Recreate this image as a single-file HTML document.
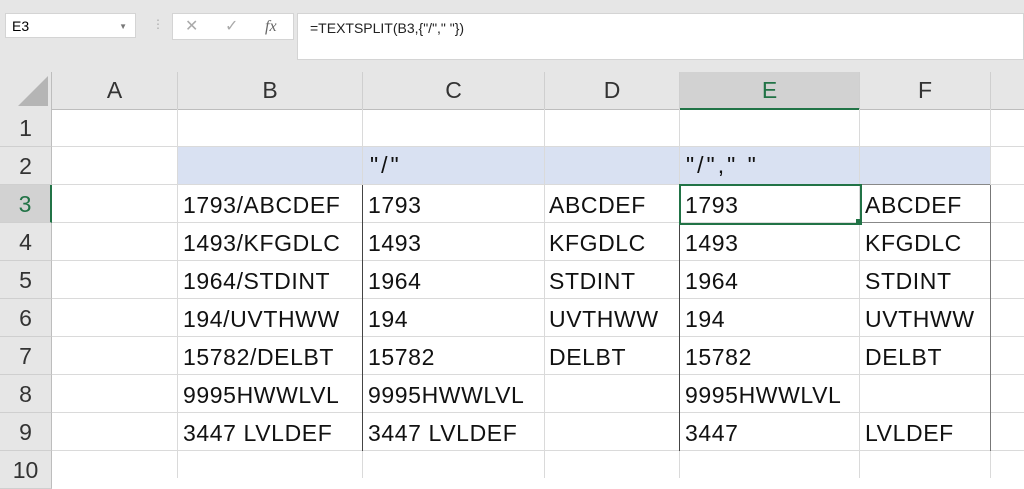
<!DOCTYPE html>
<html><head><style>
body{margin:0;width:1024px;height:478px;overflow:hidden;background:#fff;font-family:"Liberation Sans",sans-serif;position:relative}
.top{position:absolute;left:0;top:0;width:1024px;height:72px;background:#e6e6e6}
.box{position:absolute;background:#fff;border:1px solid #d4d4d4}
.ch{position:absolute;top:72px;height:37px;background:#e6e6e6;border-right:1px solid #cfcfcf;border-bottom:1px solid #bdbdbd;text-align:center;line-height:37px;font-size:23px;color:#333}
.rh{position:absolute;left:0;width:51px;height:37px;background:#e6e6e6;border-right:1px solid #bdbdbd;border-bottom:1px solid #cfcfcf;text-align:center;line-height:38px;font-size:23px;color:#333}
.vl{position:absolute;top:109px;width:1px;height:369px;background:#dadada}
.hl{position:absolute;left:52px;width:972px;height:1px;background:#dadada}
.t{position:absolute;font-size:23px;letter-spacing:0.6px;color:#111;line-height:40px;white-space:nowrap}
.bl{position:absolute;width:1px;background:#444}
</style></head><body>
<div class="top"></div>
<div class="box" style="left:5px;top:13px;width:131px;height:25px;font-size:14px;line-height:25px;padding-left:6px;box-sizing:border-box">E3<span style="position:absolute;right:8px;font-size:8px;color:#777">▼</span></div>
<div style="position:absolute;left:152px;top:17px;color:#aaa;font-size:12px">⋮</div>
<div class="box" style="left:172px;top:13px;width:120px;height:25px;color:#aaa;font-size:16px;line-height:25px">
<span style="position:absolute;left:12px">✕</span><span style="position:absolute;left:52px">✓</span><span style="position:absolute;left:92px;font-family:'Liberation Serif',serif;font-style:italic;color:#666">fx</span></div>
<div class="box" style="left:297px;top:13px;width:727px;height:47px;font-size:14px;padding:6px 0 0 12px;box-sizing:border-box;color:#222">=TEXTSPLIT(B3,{"/"," "})</div>
<div class="ch" style="left:0;width:51px;border-right:1px solid #bdbdbd"><div style="position:absolute;right:3px;bottom:3px;width:0;height:0;border-left:30px solid transparent;border-bottom:30px solid #b5b5b5"></div></div>
<div class="ch" style="left:52px;width:125px">A</div>
<div class="ch" style="left:178px;width:184px">B</div>
<div class="ch" style="left:363px;width:181px">C</div>
<div class="ch" style="left:545px;width:134px">D</div>
<div class="ch" style="left:680px;width:179px;background:#d2d2d2;color:#217346;border-bottom:2px solid #217346;height:36px">E</div>
<div class="ch" style="left:860px;width:130px">F</div>
<div class="ch" style="left:991px;width:33px;border-right:0"></div>
<div style="position:absolute;left:178px;top:147px;width:813px;height:38px;background:#d9e1f2"></div>
<div class="vl" style="left:177px"></div><div class="vl" style="left:362px"></div><div class="vl" style="left:544px"></div><div class="vl" style="left:679px"></div><div class="vl" style="left:859px"></div><div class="vl" style="left:990px"></div>
<div class="hl" style="top:146px"></div><div class="hl" style="top:184px"></div><div class="hl" style="top:222px"></div><div class="hl" style="top:260px"></div><div class="hl" style="top:298px"></div><div class="hl" style="top:336px"></div><div class="hl" style="top:374px"></div><div class="hl" style="top:412px"></div><div class="hl" style="top:450px"></div>
<div class="rh" style="top:109px">1</div><div class="rh" style="top:147px">2</div><div class="rh" style="top:185px;background:#d2d2d2;color:#217346;border-right:2px solid #217346;width:50px">3</div><div class="rh" style="top:223px">4</div><div class="rh" style="top:261px">5</div><div class="rh" style="top:299px">6</div><div class="rh" style="top:337px">7</div><div class="rh" style="top:375px">8</div><div class="rh" style="top:413px">9</div><div class="rh" style="top:451px">10</div>
<div class="bl" style="left:362px;top:185px;height:266px"></div>
<div class="bl" style="left:679px;top:185px;height:266px"></div>
<div class="bl" style="left:990px;top:185px;height:266px;background:#777"></div>
<div style="position:absolute;left:680px;top:184px;width:310px;height:1px;background:#888"></div>
<div style="position:absolute;left:860px;top:222px;width:130px;height:1px;background:#888"></div>
<div style="position:absolute;left:679px;top:184px;width:179px;height:37px;border:2px solid #217346"></div>
<div style="position:absolute;left:856px;top:219px;width:5px;height:5px;background:#217346"></div>
<div class="t" style="left:370px;top:145px;letter-spacing:3px">"/"</div>
<div class="t" style="left:686px;top:145px;letter-spacing:3px">"/"," "</div>
<div class="t" style="left:183px;top:185px">1793/ABCDEF</div><div class="t" style="left:368px;top:185px">1793</div><div class="t" style="left:549px;top:185px">ABCDEF</div><div class="t" style="left:685px;top:185px">1793</div><div class="t" style="left:865px;top:185px">ABCDEF</div>
<div class="t" style="left:183px;top:223px">1493/KFGDLC</div><div class="t" style="left:368px;top:223px">1493</div><div class="t" style="left:549px;top:223px">KFGDLC</div><div class="t" style="left:685px;top:223px">1493</div><div class="t" style="left:865px;top:223px">KFGDLC</div>
<div class="t" style="left:183px;top:261px">1964/STDINT</div><div class="t" style="left:368px;top:261px">1964</div><div class="t" style="left:549px;top:261px">STDINT</div><div class="t" style="left:685px;top:261px">1964</div><div class="t" style="left:865px;top:261px">STDINT</div>
<div class="t" style="left:183px;top:299px">194/UVTHWW</div><div class="t" style="left:368px;top:299px">194</div><div class="t" style="left:549px;top:299px">UVTHWW</div><div class="t" style="left:685px;top:299px">194</div><div class="t" style="left:865px;top:299px">UVTHWW</div>
<div class="t" style="left:183px;top:337px">15782/DELBT</div><div class="t" style="left:368px;top:337px">15782</div><div class="t" style="left:549px;top:337px">DELBT</div><div class="t" style="left:685px;top:337px">15782</div><div class="t" style="left:865px;top:337px">DELBT</div>
<div class="t" style="left:183px;top:375px">9995HWWLVL</div><div class="t" style="left:368px;top:375px">9995HWWLVL</div><div class="t" style="left:685px;top:375px">9995HWWLVL</div>
<div class="t" style="left:183px;top:413px">3447 LVLDEF</div><div class="t" style="left:368px;top:413px">3447 LVLDEF</div><div class="t" style="left:685px;top:413px">3447</div><div class="t" style="left:865px;top:413px">LVLDEF</div>
</body></html>
